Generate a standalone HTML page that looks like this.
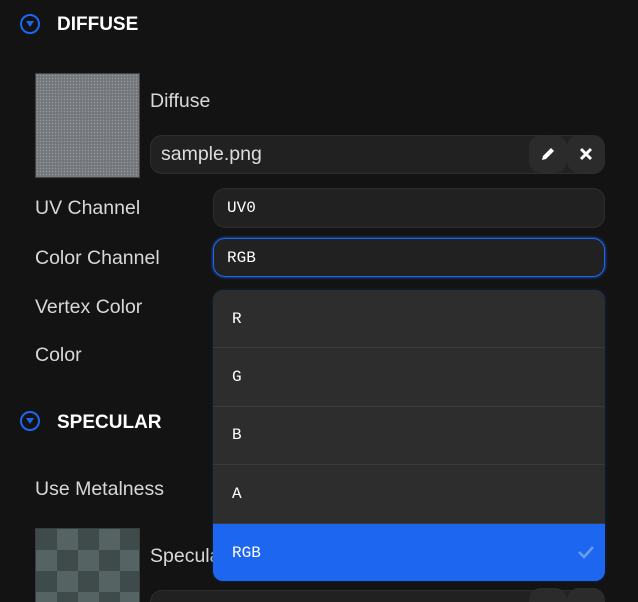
<!DOCTYPE html>
<html><head><style>
*{box-sizing:border-box;margin:0;padding:0}
html,body{width:638px;height:602px;overflow:hidden}
body{background:#131313;position:relative;font-family:"Liberation Sans",sans-serif;color:#d8d8d8}
.a{position:absolute}
.hd{font-weight:bold;color:#fff;font-size:19px}
.ic{width:20px;height:20px;border:2px solid #1c66f0;border-radius:50%}
.ic:after{content:"";position:absolute;left:4px;top:5px;border-left:4px solid transparent;border-right:4px solid transparent;border-top:6px solid #1c66f0}
.lb{font-size:19.5px;color:#d8d8d8}
.in{background:#212121;border:1px solid #2e2e2e;border-radius:12px;font-family:"Liberation Mono",monospace;font-size:16px;color:#fff;padding-left:13px;display:flex;align-items:center}
.btn{background:#2b2b2b;border-radius:12px;width:38px;height:38px;display:flex;align-items:center;justify-content:center}
.dd{left:213px;top:290px;width:392px;height:291px;background:#2d2d2d;border-radius:10px;overflow:hidden;box-shadow:0 0 3px #0d2a5a}
.it{height:58.4px;border-bottom:1px solid #3b3b3b;font-family:"Liberation Mono",monospace;font-size:16px;color:#fff;padding-left:19px;display:flex;align-items:center}
</style></head><body>
<div class="a ic" style="left:20px;top:14px"></div>
<div class="a hd" style="left:57px;top:14px">DIFFUSE</div>
<div class="a" style="left:35px;top:73px;width:105px;height:105px;background:#73767b;border:1px solid #444;background-image:radial-gradient(#959aa0 0.6px,transparent 0.9px);background-size:3px 3px"></div>
<div class="a lb" style="left:150px;top:90px">Diffuse</div>
<div class="a in" style="left:150px;top:135px;width:455px;height:39px;font-family:'Liberation Sans',sans-serif;font-size:19.5px;color:#ddd;padding-left:10px">sample.png</div>
<div class="a btn" style="left:529px;top:135px"><svg width="18" height="18" viewBox="0 0 18 18"><path d="M3 15l1-4 8-8 3 3-8 8z" fill="#fff"/></svg></div>
<div class="a btn" style="left:567px;top:135px"><svg width="14" height="14" viewBox="0 0 14 14"><path d="M2 2l10 10M12 2L2 12" stroke="#fff" stroke-width="3"/></svg></div>
<div class="a lb" style="left:35px;top:197px">UV Channel</div>
<div class="a in" style="left:213px;top:188px;width:392px;height:40px">UV0</div>
<div class="a lb" style="left:35px;top:247px">Color Channel</div>
<div class="a in" style="left:213px;top:238px;width:392px;height:39px;border:1.5px solid #1c66f0;box-shadow:0 0 3px #1c66f0">RGB</div>
<div class="a lb" style="left:35px;top:296px">Vertex Color</div>
<div class="a lb" style="left:35px;top:344px">Color</div>
<div class="a" style="left:213px;top:340px;width:2px;height:30px;background:#c0475a"></div>
<div class="a ic" style="left:20px;top:411px"></div>
<div class="a hd" style="left:57px;top:412px">SPECULAR</div>
<div class="a lb" style="left:35px;top:478px">Use Metalness</div>
<div class="a" style="left:35px;top:528px;width:105px;height:80px;border:1px solid #3a3f3f;background-color:#3f4b4b;background-image:conic-gradient(#566363 25%,#3f4b4b 0 50%,#566363 0 75%,#3f4b4b 0);background-size:42px 42px"></div>
<div class="a lb" style="left:150px;top:545px">Specular</div>
<div class="a in" style="left:150px;top:590px;width:455px;height:39px"></div>
<div class="a btn" style="left:529px;top:588px"></div>
<div class="a btn" style="left:567px;top:588px"></div>
<div class="a dd">
<div class="it">R</div><div class="it">G</div><div class="it">B</div><div class="it">A</div>
<div class="it" style="background:#1c66f0;border:none;height:58px;position:relative">RGB<svg style="position:absolute;right:10px;top:21px" width="18" height="14" viewBox="0 0 18 14"><path d="M2 7l5 5 9-10" stroke="#6b9cf0" stroke-width="2.5" fill="none"/></svg></div>
</div>
</body></html>
